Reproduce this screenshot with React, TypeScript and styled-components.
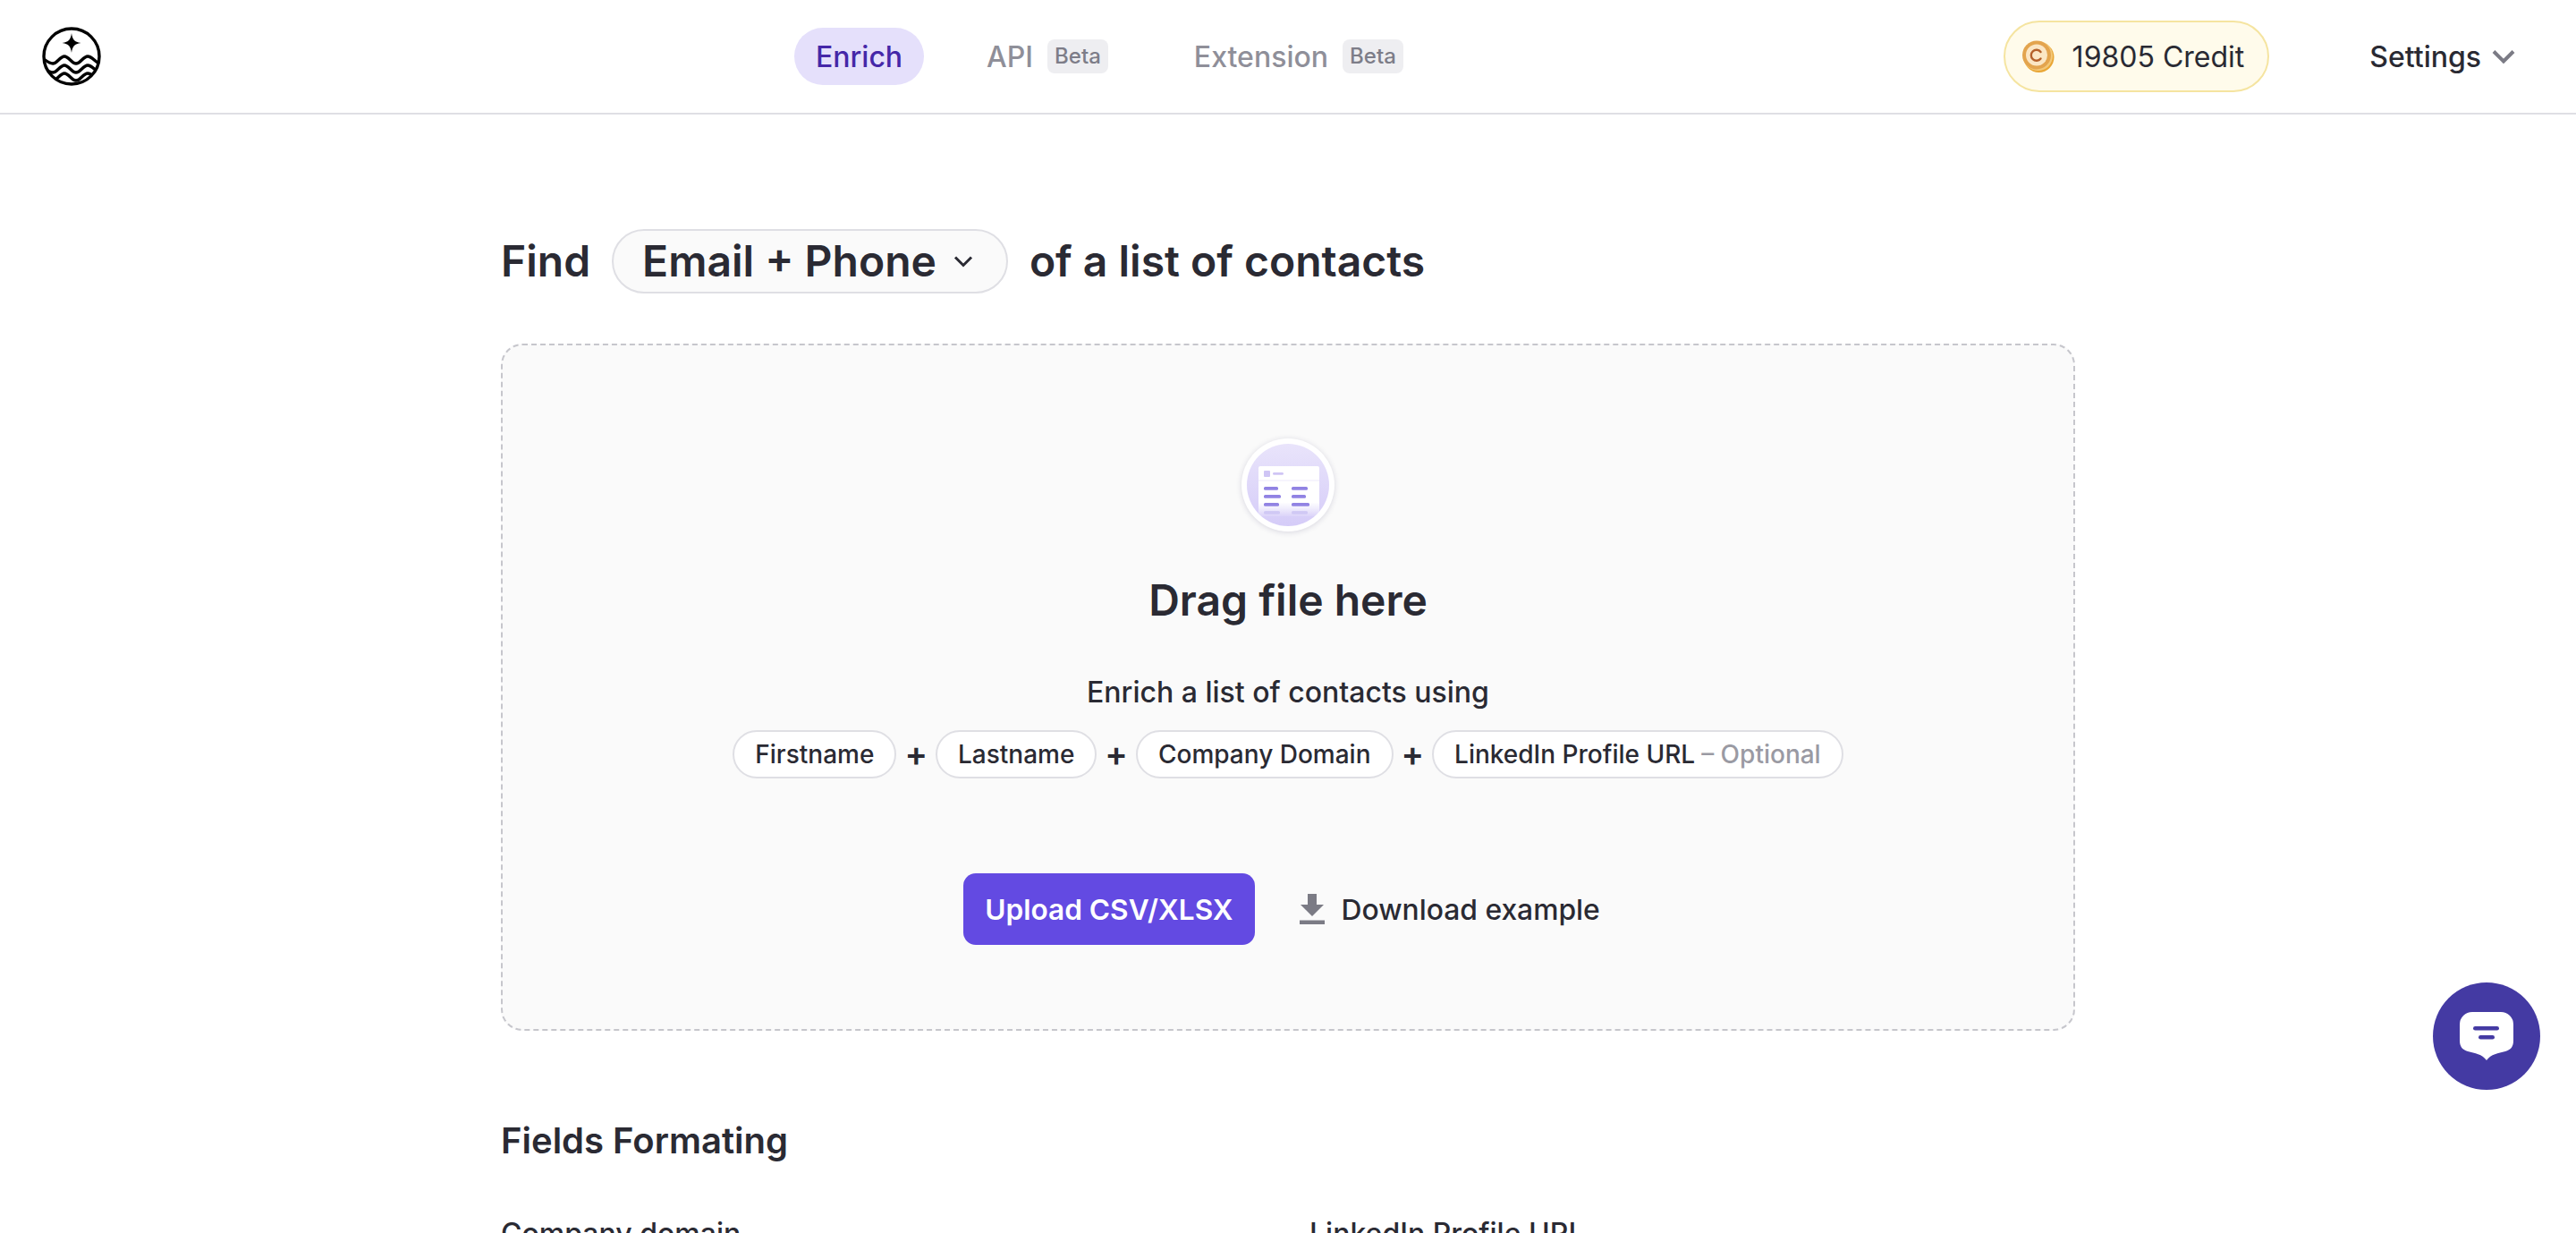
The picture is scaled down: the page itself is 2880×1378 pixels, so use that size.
import React from 'react';
import styled, { createGlobalStyle } from 'styled-components';

const GlobalStyle = createGlobalStyle`
  html, body {
    margin: 0;
    padding: 0;
    height: 100%;
    overflow: hidden;
    background: #fff;
    font-family: Inter, "Liberation Sans", sans-serif;
    color: #2a2a33;
  }
  * { box-sizing: border-box; }
`;

const Header = styled.header`
  display: flex;
  align-items: center;
  height: 128px;
  padding: 0 68px 0 47px;
  border-bottom: 2px solid #dfdfe4;
`;

const Logo = styled.svg`
  width: 66px;
  height: 66px;
  flex: none;
`;

const Nav = styled.nav`
  display: flex;
  align-items: center;
  margin-left: 775px;
`;

const NavItem = styled.a<{ $active?: boolean }>`
  display: flex;
  align-items: center;
  height: 64px;
  padding: 0 24px;
  margin-right: 46px;
  border-radius: 32px;
  font-size: 32px;
  font-weight: 500;
  color: ${p => (p.$active ? '#4527a8' : '#8f8f99')};
  background: ${p => (p.$active ? '#e5e0fb' : 'transparent')};
`;

const BetaTag = styled.span`
  margin: 0 2px 0 16px;
  padding: 4px 8px;
  border-radius: 8px;
  background: #eeeef1;
  color: #7d7d88;
  font-size: 24px;
  line-height: 30px;
`;

const HeaderRight = styled.div`
  display: flex;
  align-items: center;
  margin-left: auto;
`;

const CreditPill = styled.div`
  display: flex;
  align-items: center;
  gap: 20px;
  height: 80px;
  padding: 0 26px 0 18px;
  border: 2px solid #f5e4a0;
  border-radius: 40px;
  background: #fffbeb;
  font-size: 32px;
`;

const SettingsButton = styled.div`
  display: flex;
  align-items: center;
  gap: 12px;
  margin-left: 112px;
  font-size: 32px;
  font-weight: 500;
`;

const Main = styled.main`
  width: 1760px;
  margin: 0 auto;
  padding-top: 128px;
`;

const TitleRow = styled.div`
  display: flex;
  align-items: center;
  gap: 24px;
  font-size: 48px;
  font-weight: 600;
  line-height: 72px;
`;

const TypeSelect = styled.div`
  display: flex;
  align-items: center;
  gap: 18px;
  height: 72px;
  padding: 0 36px 0 32px;
  border: 2px solid #dfdfe4;
  border-radius: 36px;
  background: #fafafa;
`;

const DropZone = styled.section`
  display: flex;
  flex-direction: column;
  align-items: center;
  margin-top: 56px;
  height: 768px;
  padding-top: 104px;
  border: 2px dashed #c6c6cc;
  border-radius: 24px;
  background: #fafafa;
`;

const IconRing = styled.div`
  width: 104px;
  height: 104px;
  border-radius: 50%;
  background: #fff;
  padding: 6px;
  box-shadow: 0 1px 6px rgba(40, 30, 90, 0.16);
`;

const DropTitle = styled.h2`
  margin: 47px 0 0;
  font-size: 48px;
  font-weight: 600;
  line-height: 60px;
`;

const DropText = styled.p`
  margin: 51px 0 0;
  font-size: 32px;
  font-weight: 500;
  line-height: 44px;
`;

const ChipRow = styled.div`
  display: flex;
  align-items: center;
  gap: 9px;
  margin-top: 20px;
`;

const Chip = styled.span`
  display: flex;
  align-items: center;
  height: 54px;
  padding: 0 23px;
  border: 2px solid #dfdfe4;
  border-radius: 27px;
  background: #fff;
  font-size: 28px;
  font-weight: 500;
`;

const ChipNote = styled.span`
  margin-left: 7px;
  color: #9a9aa3;
`;

const Plus = styled.span`
  padding-bottom: 3px;
  font-size: 38px;
  font-weight: 600;
  line-height: 50px;
`;

const ActionRow = styled.div`
  display: flex;
  align-items: center;
  gap: 49px;
  margin-top: 106px;
  margin-right: 14px;
`;

const UploadButton = styled.button`
  height: 80px;
  padding: 0 24px;
  border: none;
  border-radius: 14px;
  background: #634ae2;
  color: #fff;
  font-family: inherit;
  font-size: 31.6px;
  font-weight: 600;
`;

const DownloadLink = styled.a`
  display: flex;
  align-items: center;
  gap: 18px;
  font-size: 31.8px;
  font-weight: 500;
`;

const SectionTitle = styled.h3`
  margin: 96px 0 0;
  font-size: 40px;
  font-weight: 600;
  line-height: 54px;
`;

const FieldGrid = styled.div`
  display: grid;
  grid-template-columns: 904px 1fr;
  margin-top: 55px;
  font-size: 32px;
  font-weight: 500;
  line-height: 44px;
`;

const ChatBubble = styled.div`
  position: fixed;
  left: 2720px;
  top: 1098px;
  display: flex;
  align-items: center;
  justify-content: center;
  width: 120px;
  height: 120px;
  border-radius: 50%;
  background: #443aa3;
`;

const App: React.FC = () => {
  return (
    <>
      <GlobalStyle />
      <Header>
        <Logo viewBox="0 0 66 66" fill="none">
          <defs>
            <clipPath id="logoClip">
              <circle cx="33" cy="33" r="31" />
            </clipPath>
          </defs>
          <path d="M33 7c1 7 3 10 10.5 11C36 19 34 22 33 29c-1-7-3-10-10.5-11C30 17 32 14 33 7z" fill="#000" />
          <g clipPath="url(#logoClip)" stroke="#000" strokeWidth="3.4">
            <path d="M2 36c4 3 7 5 10 5 5 0 8-8 13-8s8 8 13 8 8-8 13-8 8 6 13 8" />
            <path d="M2 46c4 3 7 5 10 5 5 0 8-8 13-8s8 8 13 8 8-8 13-8 8 6 13 8" />
            <path d="M2 55c4 3 7 5 10 5 5 0 8-8 13-8s8 8 13 8 8-8 13-8 8 6 13 8" />
          </g>
          <circle cx="33" cy="33" r="31" stroke="#000" strokeWidth="3.4" />
        </Logo>
        <Nav>
          <NavItem $active>Enrich</NavItem>
          <NavItem>API<BetaTag>Beta</BetaTag></NavItem>
          <NavItem>Extension<BetaTag>Beta</BetaTag></NavItem>
        </Nav>
        <HeaderRight>
          <CreditPill>
            <svg width="37" height="36" viewBox="0 0 37 36">
              <circle cx="19.5" cy="19" r="17" fill="#e9a635" />
              <circle cx="18.5" cy="17.5" r="16.5" fill="#f3c878" />
              <circle cx="17" cy="16.5" r="16" fill="#e3a44e" />
              <circle cx="17" cy="16.5" r="12" fill="#fbe6c4" />
              <path d="M21.5 13a6 6 0 1 0 0 7.5" fill="none" stroke="#b4602a" strokeWidth="2.4" strokeLinecap="round" />
            </svg>
            19805 Credit
          </CreditPill>
          <SettingsButton>
            Settings
            <svg width="26" height="16" viewBox="0 0 26 16" fill="none">
              <path d="M2 2.5l11 11 11-11" stroke="#7b7b85" strokeWidth="4" />
            </svg>
          </SettingsButton>
        </HeaderRight>
      </Header>
      <Main>
        <TitleRow>
          Find
          <TypeSelect>
            Email + Phone
            <svg width="24" height="14" viewBox="0 0 24 14" fill="none">
              <path d="M3 2.5l9 9 9-9" stroke="#2a2a33" strokeWidth="3" />
            </svg>
          </TypeSelect>
          of a list of contacts
        </TitleRow>
        <DropZone>
          <IconRing>
            <svg width="92" height="92" viewBox="0 0 92 92">
              <defs>
                <linearGradient id="ringFill" x1="0" y1="0" x2="0" y2="1">
                  <stop offset="0" stopColor="#e9e4fb" />
                  <stop offset="1" stopColor="#d5ccf8" />
                </linearGradient>
                <linearGradient id="cardFill" x1="0" y1="0" x2="0" y2="1">
                  <stop offset="0.72" stopColor="#fff" />
                  <stop offset="1" stopColor="#fff" stopOpacity="0.1" />
                </linearGradient>
              </defs>
              <circle cx="46" cy="46" r="46" fill="url(#ringFill)" />
              <rect x="13" y="25" width="68" height="56" rx="2" fill="url(#cardFill)" />
              <rect x="19" y="30" width="7" height="7" rx="1" fill="#cfc5f5" />
              <rect x="29" y="32" width="12" height="2.8" rx="1.4" fill="#cfc5f5" />
              <path d="M13 41h68" stroke="#eeeafb" />
              <g fill="#9183e3">
                <rect x="19" y="48" width="16" height="3.8" rx="1.5" />
                <rect x="19" y="57" width="19" height="3.8" rx="1.5" />
                <rect x="19" y="66" width="17" height="3.8" rx="1.5" />
                <rect x="50" y="48" width="18" height="3.8" rx="1.5" />
                <rect x="50" y="57" width="16" height="3.8" rx="1.5" />
                <rect x="50" y="66" width="20" height="3.8" rx="1.5" />
                <rect x="19" y="75" width="18" height="3.4" rx="1.5" opacity="0.25" />
                <rect x="50" y="75" width="18" height="3.4" rx="1.5" opacity="0.25" />
              </g>
            </svg>
          </IconRing>
          <DropTitle>Drag file here</DropTitle>
          <DropText>Enrich a list of contacts using</DropText>
          <ChipRow>
            <Chip>Firstname</Chip>
            <Plus>+</Plus>
            <Chip>Lastname</Chip>
            <Plus>+</Plus>
            <Chip>Company Domain</Chip>
            <Plus>+</Plus>
            <Chip>LinkedIn Profile URL<ChipNote>– Optional</ChipNote></Chip>
          </ChipRow>
          <ActionRow>
            <UploadButton>Upload CSV/XLSX</UploadButton>
            <DownloadLink>
              <svg width="30" height="34" viewBox="0 0 30 34" fill="#7b7b85">
                <path d="M10 0h10v12h8L15 25 2 12h8z" />
                <rect x="1" y="29.5" width="28" height="4.5" />
              </svg>
              Download example
            </DownloadLink>
          </ActionRow>
        </DropZone>
        <SectionTitle>Fields Formating</SectionTitle>
        <FieldGrid>
          <span>Company domain</span>
          <span>LinkedIn Profile URL</span>
        </FieldGrid>
      </Main>
      <ChatBubble>
        <svg width="60" height="54" viewBox="0 0 60 54">
          <path d="M14 0h32a14 14 0 0 1 14 14v18c0 7-3 10-9 12-8 2-16 3-21 10-5-7-13-8-21-10-6-2-9-5-9-12V14A14 14 0 0 1 14 0z" fill="#fff" />
          <rect x="15" y="16" width="29" height="4.6" rx="2.3" fill="#443aa3" />
          <rect x="21" y="26" width="18" height="4.6" rx="2.3" fill="#443aa3" />
        </svg>
      </ChatBubble>
    </>
  );
};

export default App;
